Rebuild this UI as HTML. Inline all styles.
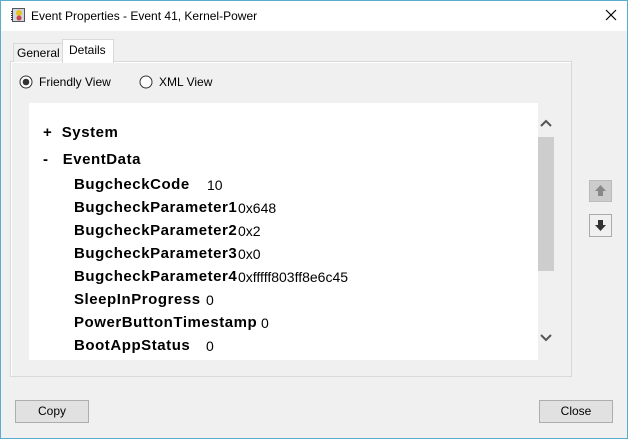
<!DOCTYPE html>
<html><head><meta charset="utf-8"><style>
*{margin:0;padding:0;box-sizing:border-box}
body{width:628px;height:439px;background:#f0f0f0;font-family:"Liberation Sans",sans-serif;position:relative;overflow:hidden}
.a{position:absolute}
.t{font-size:12px;color:#000}
.b{font-weight:bold;font-size:15px;letter-spacing:0.55px;white-space:nowrap}
.v{font-size:14px;white-space:nowrap}
.btn{position:absolute;background:#e1e1e1;border:1px solid #adadad;font-size:12px;text-align:center;line-height:21px}
</style></head><body>
<div class="a" style="left:0;top:0;width:628px;height:31px;background:#fff"></div>
<div class="a" style="left:0;top:0;width:1px;height:439px;background:#5aaecb"></div>
<div class="a" style="left:627px;top:0;width:1px;height:439px;background:#5aaecb"></div>
<div class="a" style="left:0;top:438px;width:628px;height:1px;background:#5aaecb"></div>
<div class="a" style="left:0;top:0;width:628px;height:1px;background:#5aaecb"></div>
<svg class="a" style="left:11px;top:7px" width="15" height="16"><rect x="1.5" y="1.5" width="12" height="13" fill="#cfd6e6" stroke="#555"/><line x1="1" y1="4" x2="1" y2="13" stroke="#333" stroke-width="2" stroke-dasharray="1 1"/><circle cx="8" cy="6" r="3" fill="#e8c020"/><circle cx="8" cy="11" r="2.5" fill="#c44"/></svg>
<div class="a t" style="left:31px;top:9px">Event Properties - Event 41, Kernel-Power</div>
<svg class="a" style="left:605px;top:9px" width="12" height="12"><path d="M1 1L11 11M11 1L1 11" stroke="#000" stroke-width="1.2"/></svg>
<div class="a" style="left:10px;top:61px;width:562px;height:316px;border:1px solid #d9d9d9;background:#f0f0f0;box-shadow:inset 1px 1px 0 #fff"></div>
<div class="a" style="left:13px;top:43px;width:50px;height:19px;border:1px solid #d9d9d9;border-bottom:none;background:#f0f0f0"></div>
<div class="a t" style="left:17px;top:46px">General</div>
<div class="a" style="left:62px;top:39px;width:52px;height:24px;border:1px solid #d9d9d9;border-bottom:none;background:#fff"></div>
<div class="a t" style="left:69px;top:43px">Details</div>
<svg class="a" style="left:19px;top:75px" width="14" height="14"><circle cx="7" cy="7" r="6" fill="#fff" stroke="#333"/><circle cx="7" cy="7" r="3.3" fill="#333"/></svg>
<div class="a t" style="left:39px;top:75px">Friendly View</div>
<svg class="a" style="left:139px;top:75px" width="14" height="14"><circle cx="7" cy="7" r="6" fill="#fff" stroke="#333"/></svg>
<div class="a t" style="left:159px;top:75px">XML View</div>
<div class="a" style="left:29px;top:103px;width:509px;height:257px;background:#fff"></div>
<div class="a" style="left:538px;top:137px;width:16px;height:134px;background:#cdcdcd"></div>
<svg class="a" style="left:540px;top:119px" width="12" height="10"><path d="M1 7L6 2L11 7" fill="none" stroke="#555" stroke-width="2"/></svg>
<svg class="a" style="left:540px;top:333px" width="12" height="10"><path d="M1 2L6 7L11 2" fill="none" stroke="#555" stroke-width="2"/></svg>
<div class="a" style="left:589px;top:180px;width:23px;height:22px;background:#ccc;border:1px solid #bbb"></div>
<svg class="a" style="left:593px;top:183px" width="15" height="15"><path d="M7.5 2L13 8H10V13H5V8H2Z" fill="#888"/></svg>
<div class="a" style="left:589px;top:214px;width:23px;height:23px;background:#f0f0f0;border:1px solid #aaa"></div>
<svg class="a" style="left:593px;top:218px" width="15" height="15"><path d="M5 2H10V7H13L7.5 13L2 7H5Z" fill="#333"/></svg>
<div class="a b" style="left:43px;top:124px">+&nbsp;&nbsp;System</div>
<div class="a b" style="left:43px;top:151px">-&nbsp;&nbsp;&nbsp;EventData</div>
<div class="a b" style="left:74px;top:176px">BugcheckCode</div><div class="a v" style="left:207px;top:177px">10</div>
<div class="a b" style="left:74px;top:199px">BugcheckParameter1</div><div class="a v" style="left:238px;top:200px">0x648</div>
<div class="a b" style="left:74px;top:222px">BugcheckParameter2</div><div class="a v" style="left:238px;top:223px">0x2</div>
<div class="a b" style="left:74px;top:245px">BugcheckParameter3</div><div class="a v" style="left:238px;top:246px">0x0</div>
<div class="a b" style="left:74px;top:268px">BugcheckParameter4</div><div class="a v" style="left:238px;top:269px">0xfffff803ff8e6c45</div>
<div class="a b" style="left:74px;top:291px">SleepInProgress</div><div class="a v" style="left:206px;top:292px">0</div>
<div class="a b" style="left:74px;top:314px">PowerButtonTimestamp</div><div class="a v" style="left:261px;top:315px">0</div>
<div class="a b" style="left:74px;top:337px">BootAppStatus</div><div class="a v" style="left:206px;top:338px">0</div>
<div class="btn" style="left:15px;top:400px;width:74px;height:23px">Copy</div>
<div class="btn" style="left:539px;top:400px;width:74px;height:23px">Close</div>
</body></html>
